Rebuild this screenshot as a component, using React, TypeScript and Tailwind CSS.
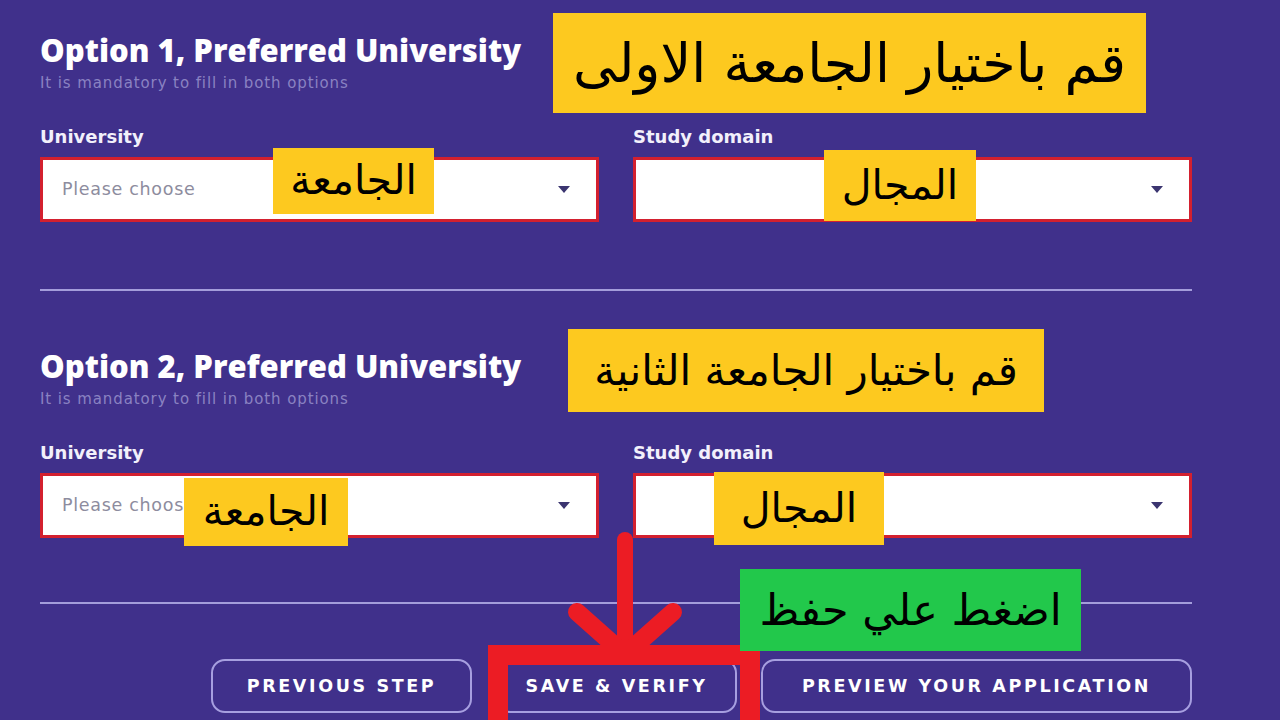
import React from 'react';

const heading = { fontFamily: '"Open Sans", Lato, sans-serif' };
const body = { fontFamily: '"DejaVu Sans", "Open Sans", sans-serif' };
const arabic = { fontFamily: '"DejaVu Sans", "Noto Sans", sans-serif' };

const Caret = () => (
  <svg width="12" height="7" viewBox="0 0 12 7" className="shrink-0">
    <path d="M0 0h12L6 7z" fill="#3b3570" />
  </svg>
);

const SelectBox = ({ label, placeholder }: { label: string; placeholder?: string }) => (
  <div>
    <div className="text-[18px] leading-[20px] font-bold text-[#f2f0fb]" style={body}>{label}</div>
    <div className="mt-[10px] h-[65px] bg-white border-[3px] border-[#d3202f] flex items-center justify-between pl-[19px] pr-[26px]">
      <span className="text-[17.5px] tracking-[0.04em] text-[#8d8c9e]" style={body}>{placeholder ?? ''}</span>
      <Caret />
    </div>
  </div>
);

const OptionBlock = ({ n }: { n: number }) => (
  <section>
    <h2 className="text-[31px] leading-[36px] font-extrabold text-white" style={heading}>
      Option {n}, Preferred University
    </h2>
    <p className="mt-[5px] text-[15px] leading-[20px] tracking-[0.06em] text-[#8a82c2]" style={body}>
      It is mandatory to fill in both options
    </p>
    <div className="mt-[34px] grid grid-cols-2 gap-x-[34px]">
      <SelectBox label="University" placeholder="Please choose" />
      <SelectBox label="Study domain" />
    </div>
  </section>
);

const NavButton = ({ text, w }: { text: string; w: string }) => (
  <button
    className={`${w} h-[54px] rounded-[14px] border-2 border-[#a79fe0] text-white text-[17.5px] font-bold tracking-[0.15em] uppercase`}
    style={body}
  >
    {text}
  </button>
);

// yellow / green call-out tags laid over the form
const Tag = ({ text, cls, size }: { text: string; cls: string; size: string }) => (
  <div className={`absolute flex items-center justify-center text-black ${cls}`} dir="rtl">
    <span className={size} style={arabic}>{text}</span>
  </div>
);

export default function App() {
  return (
    <div className="relative w-[1280px] h-[720px] overflow-hidden bg-[#40308b]">
      <div className="ml-[40px] w-[1152px] pt-[32px]">
        <OptionBlock n={1} />
        <div className="mt-[67px] h-[2px] bg-[#a49ddb]" />
        <div className="mt-[57px]">
          <OptionBlock n={2} />
        </div>
        <div className="mt-[64px] h-[2px] bg-[#a49ddb]" />
        <div className="mt-[55px] flex justify-end gap-[24px]">
          <NavButton text="Previous step" w="w-[261px]" />
          <NavButton text="Save & verify" w="w-[241px]" />
          <NavButton text="Preview your application" w="w-[431px]" />
        </div>
      </div>

      <Tag text="قم باختيار الجامعة الاولى" cls="left-[553px] top-[13px] w-[593px] h-[100px] bg-[#fdc91f]" size="text-[54px]" />
      <Tag text="الجامعة" cls="left-[273px] top-[148px] w-[161px] h-[66px] bg-[#fdc91f]" size="text-[41px]" />
      <Tag text="المجال" cls="left-[824px] top-[150px] w-[152px] h-[71px] bg-[#fdc91f]" size="text-[41px]" />
      <Tag text="قم باختيار الجامعة الثانية" cls="left-[568px] top-[329px] w-[476px] h-[83px] bg-[#fdc91f]" size="text-[42px]" />
      <Tag text="الجامعة" cls="left-[184px] top-[478px] w-[164px] h-[68px] bg-[#fdc91f]" size="text-[41px]" />
      <Tag text="المجال" cls="left-[714px] top-[472px] w-[170px] h-[73px] bg-[#fdc91f]" size="text-[41px]" />

      {/* red arrow and frame around the save button */}
      <svg className="absolute inset-0 pointer-events-none" width="1280" height="720">
        <g stroke="#ec1c24" fill="none">
          <line x1="625" y1="540" x2="625" y2="650" strokeWidth="16" strokeLinecap="round" />
          <line x1="577" y1="612" x2="622" y2="652" strokeWidth="18" strokeLinecap="round" />
          <line x1="673" y1="612" x2="628" y2="652" strokeWidth="18" strokeLinecap="round" />
          <rect x="498" y="655" width="252" height="90" strokeWidth="20" />
        </g>
      </svg>

      <Tag text="اضغط علي حفظ" cls="left-[740px] top-[569px] w-[341px] h-[82px] bg-[#22c84b]" size="text-[43px]" />
    </div>
  );
}
